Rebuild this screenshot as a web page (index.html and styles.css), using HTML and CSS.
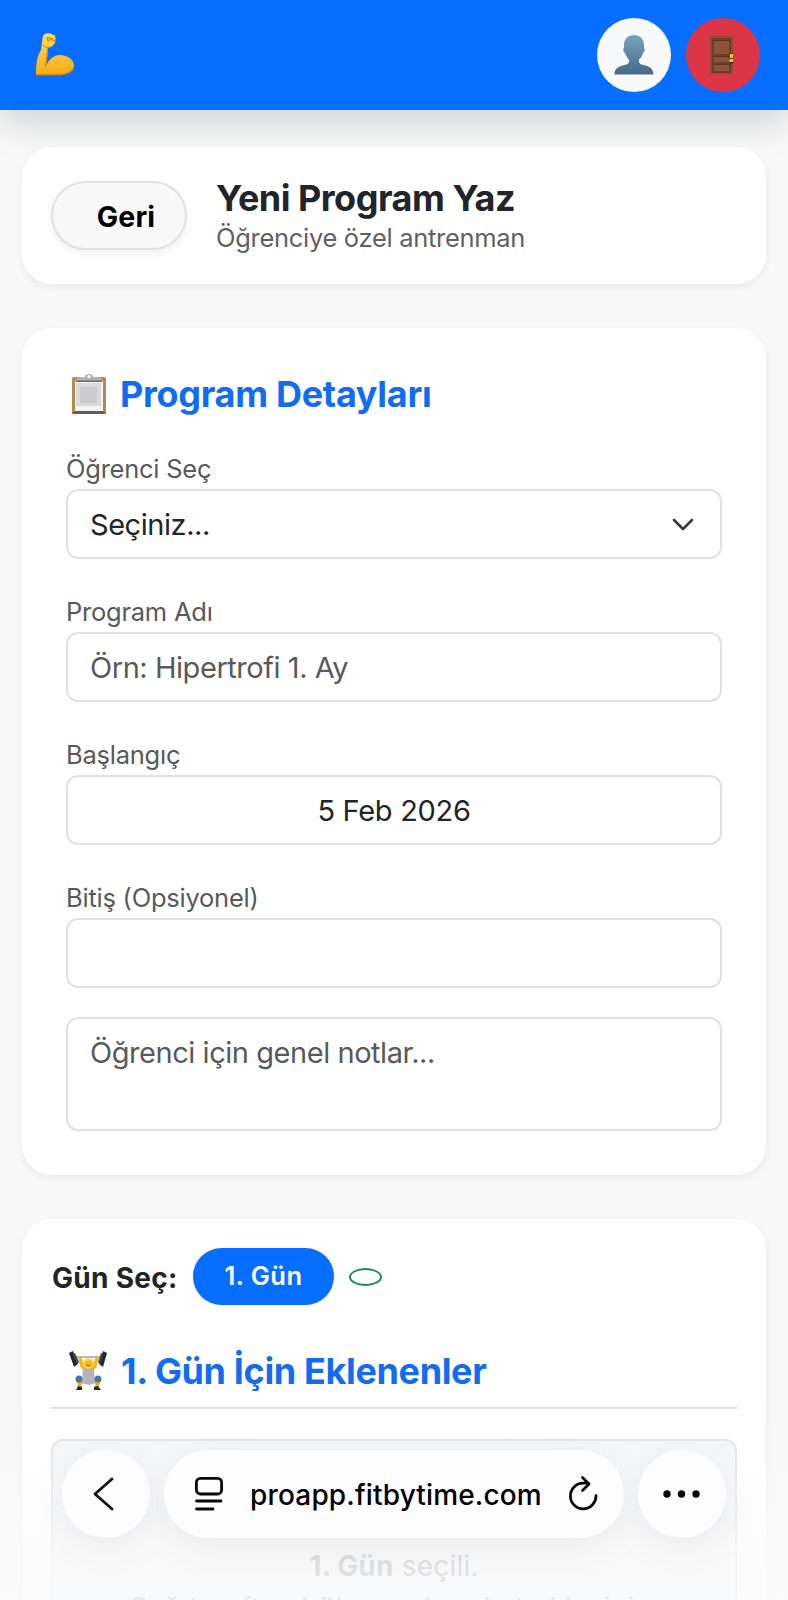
FILE: index.html
```html
<!doctype html>
<html lang="tr">
<head>
  <meta charset="UTF-8">
  <meta name="viewport" content="width=device-width, initial-scale=1.0">
  <title>Yeni Program Yaz</title>
  <link rel="stylesheet" href="styles.css">
</head>
<body>

<header class="Header">
  <svg class="Header-logo" viewBox="0 0 40 44" aria-hidden="true">
    <defs>
      <linearGradient id="skin" x1="0" y1="0" x2="0" y2="1">
        <stop offset="0" stop-color="#ffdb5c"/>
        <stop offset="1" stop-color="#f9ad16"/>
      </linearGradient>
    </defs>
    <path fill="url(#skin)" d="M8 3C10 0 13 0 15 .5L20 2.500L20.500 6L20 10L17 13.500L13 14.500C13 20 12 27 11 33C14 26 19 22 25 22C33 22 39 27 39 33C39 39 31 42 22 42H1C1 33 1.500 24 6 17C7 12 7 7 8 3Z"/>
    <path fill="none" stroke="#dc8b12" stroke-width="1.200" stroke-linecap="round" d="M8 12C10 15 14 15 17 13.500M12.500 15L11 31L10 34M12 4.500L17 5.500L13 8Q12 6 13 4.500M17 7L20 8"/>
    <path fill="none" stroke="#e58b10" stroke-width="1.500" d="M1 41.500H22C31 41.500 37 39 38.500 34"/>
  </svg>
  <nav class="Header-actions">
    <a class="IconButton" aria-label="Profil">
      <svg width="40" height="40" viewBox="0 0 40 40">
        <defs>
          <linearGradient id="bust" x1="0" y1="0" x2="0" y2="1">
            <stop offset="0" stop-color="#77a3bc"/>
            <stop offset="1" stop-color="#47698a"/>
          </linearGradient>
        </defs>
        <path fill="url(#bust)" d="M20 0C26 0 30 4 30 10V13C31.500 14 30.500 17 29 18C28 21 27 23 25 24.500V27C26 32 39 28 39.500 39.500H.5C1 28 14 32 15 27V24.500C13 23 12 21 11 18C9.500 17 8.500 14 10 13V10C10 4 14 0 20 0Z"/>
      </svg>
    </a>
    <a class="IconButton IconButton--danger" aria-label="Çıkış">
      <svg width="26" height="38" viewBox="0 0 26 38">
        <path fill="#8f4c34" d="M0 0H23V38H0Z"/>
        <path fill="#6d3d29" d="M2 2H21V37H2Z"/>
        <path fill="#8d5339" d="M4 5H19V18H4ZM4 21H19V26H4ZM4 29H19V35H4Z"/>
        <path fill="none" stroke="#5d3020" d="M3 4.500H20M3 20.500H20M3 28.500H20"/>
        <path fill="#4f3225" d="M20 17H23V28H20Z"/>
        <path fill="#f4c52d" d="M20 18H23V22H20ZM19.500 23H23V26H19.500Z"/>
      </svg>
    </a>
  </nav>
</header>

<main class="Page">
  <section class="Card Card--intro">
    <button type="button" class="BackButton">Geri</button>
    <div class="Intro">
      <h1 class="Intro-title">Yeni Program Yaz</h1>
      <p class="Intro-text">Öğrenciye özel antrenman</p>
    </div>
  </section>

  <section class="Card Card--details">
    <h2 class="Heading">
      <svg class="Heading-icon" viewBox="0 0 38 44" aria-hidden="true">
        <rect x="4" y="5" width="34" height="37" rx="2" fill="#b28a4e"/>
        <path fill="#8a5b25" d="M4 40H38V41Q38 42 36 42H6Q4 42 4 41Z"/>
        <path fill="#f4f4f4" d="M7 9H35V39H7Z"/>
        <path fill="#dadada" d="M8 11H33V34H8Z"/>
        <path fill="#cbcbce" d="M12 15H29V31H12Z"/>
        <path fill="#5d5c5b" d="M7 39H35V41H7Z"/>
        <path fill="#aeb3b3" d="M8 9V7Q9 5 13 5H17Q17 2 21 2T25 5H29Q33 5 34 7V9Z"/>
        <path fill="#686b6d" d="M8 8.500H34V10H8Z"/>
        <circle cx="21" cy="4.500" r="1.600" fill="#fff"/>
      </svg>
      Program Detayları
    </h2>

    <div class="Field">
      <label class="Field-label">Öğrenci Seç</label>
      <div class="Field-control Field-control--select">
        <span>Seçiniz...</span>
        <svg width="22" height="14" viewBox="0 0 22 14" aria-hidden="true">
          <path fill="none" stroke="#343a40" stroke-width="2.600" stroke-linecap="round" stroke-linejoin="round" d="M2 2L11 11L20 2"/>
        </svg>
      </div>
    </div>

    <div class="Field">
      <label class="Field-label">Program Adı</label>
      <div class="Field-control Field-control--placeholder">Örn: Hipertrofi 1. Ay</div>
    </div>

    <div class="Field">
      <label class="Field-label">Başlangıç</label>
      <div class="Field-control Field-control--date">5 Feb 2026</div>
    </div>

    <div class="Field">
      <label class="Field-label">Bitiş (Opsiyonel)</label>
      <div class="Field-control"></div>
    </div>

    <div class="Field-control Field-control--area">Öğrenci için genel notlar...</div>
  </section>

  <section class="Card Card--days">
    <div class="Days">
      <span class="Days-label">Gün Seç:</span>
      <button type="button" class="Days-tab">1. Gün</button>
      <button type="button" class="Days-add" aria-label="Gün ekle"></button>
    </div>
    <h2 class="Heading Heading--days">
      <svg class="Heading-icon" viewBox="0 0 38 44" aria-hidden="true">
        <path fill="none" stroke="#868686" stroke-width="1.200" d="M5 8H33"/>
        <path fill="none" stroke="#f4b51b" stroke-width="3.600" stroke-linejoin="round" d="M11 9L13 17L17 21H22L26 17L28 9"/>
        <path fill="#25282d" d="M0 4L4 2L9 15L5 18ZM34 2L38 4L34 18L30 15Z"/>
        <path fill="#44484e" d="M4 5L6 4L10 13L8 15ZM32 4L34 5L31 15L29 13Z"/>
        <path fill="none" stroke="#edad18" stroke-width="3.600" d="M15 32L10 34L12 40M24 32L29 34L27 40"/>
        <path fill="#b2b4b8" d="M14 18L17 20H22L25 18L26 34L20 36L13 34Z"/>
        <circle cx="19.500" cy="14" r="4.500" fill="#f9b91b"/>
        <path fill="#ffd65a" d="M15 13Q15 9 20 9Q24 10 24 13L20 11Z"/>
        <path fill="none" stroke="#98551e" d="M17.500 16Q19.500 18 21.500 16"/>
        <circle cx="10" cy="30" r="3.500" fill="#4b76a3"/>
        <circle cx="29" cy="30" r="3.500" fill="#4b76a3"/>
        <path fill="#292b2e" d="M7 41L9 37L13 38V41ZM25 38L29 37L32 41H25Z"/>
      </svg>
      1. Gün İçin Eklenenler
    </h2>
    <div class="Empty">
      <p><strong>1. Gün</strong> seçili.</p>
      <p>Sağ taraftan bölge ve hareket ekleyiniz.</p>
    </div>
  </section>
</main>

<div class="Browser">
  <span class="Browser-button">
    <svg width="88" height="88" viewBox="0 0 88 88" aria-hidden="true">
      <path fill="none" stroke="#111" stroke-width="2.800" stroke-linecap="round" stroke-linejoin="round" d="M50 29L33 44L50 59"/>
    </svg>
  </span>
  <div class="Browser-address">
    <svg width="30" height="34" viewBox="0 0 30 34" aria-hidden="true">
      <g fill="none" stroke="#080808" stroke-width="2.800" stroke-linecap="round">
        <rect x="2.400" y="1.400" width="25.200" height="15.600" rx="4"/>
        <path d="M2.500 24H27M2.500 32H19"/>
      </g>
    </svg>
    <span class="Browser-url">proapp.fitbytime.com</span>
    <svg width="30" height="36" viewBox="0 0 30 36" aria-hidden="true">
      <path fill="none" stroke="#080808" stroke-width="2.700" stroke-linecap="round" stroke-linejoin="round" d="M28 19.500A12.800 12.800 0 1 1 15.200 7.200H20.500M14.500 1.500L21 8L14.500 14.500"/>
    </svg>
  </div>
  <span class="Browser-button">
    <svg width="88" height="88" viewBox="0 0 88 88" aria-hidden="true">
      <g fill="#080808">
        <circle cx="29" cy="44" r="3.700"/>
        <circle cx="43.500" cy="44" r="3.700"/>
        <circle cx="58" cy="44" r="3.700"/>
      </g>
    </svg>
  </span>
</div>

</body>
</html>
```
FILE: styles.css
```css
* {
  box-sizing: border-box;
}

body {
  position: relative;
  height: 1600px;
  margin: 0;
  overflow: hidden;
  background-color: #f8f8f8;
  color: #212529;
  font-family: Inter, "Liberation Sans", sans-serif;
  font-size: 29px;
}

h1,
h2,
p {
  margin: 0;
}

button {
  font-family: inherit;
}

.Header {
  display: flex;
  align-items: center;
  justify-content: space-between;
  height: 110px;
  padding: 0 28px 0 35px;
  background-color: #086eff;
  box-shadow: 0 16px 32px rgb(10 20 30 / 14%);
}

.Header-logo {
  width: 40px;
  height: 44px;
}

.Header-actions {
  display: flex;
  gap: 15px;
}

.IconButton {
  display: flex;
  align-items: center;
  justify-content: center;
  width: 74px;
  height: 74px;
  border-radius: 50%;
  background-color: #f8f9fa;
}

.IconButton--danger {
  background-color: #dc3545;
}

.Page {
  position: relative;
  display: flex;
  flex-direction: column;
  gap: 44px;
  padding: 37px 22px 0;
}

.Card {
  border-radius: 30px;
  background-color: white;
  box-shadow: 0 4px 8px rgb(0 0 0 / 5.5%);
}

.Card--intro {
  display: flex;
  align-items: center;
  gap: 29px;
  height: 137px;
  padding: 0 29px;
}

.BackButton {
  width: 136px;
  height: 69px;
  padding: 1px 0 0 14px;
  border: 2px solid #e2e2e3;
  border-radius: 35px;
  background-color: #f8f8f8;
  box-shadow: 0 4px 8px rgb(0 0 0 / 6%);
  color: black;
  font-size: 28.5px;
  font-weight: 650;
  letter-spacing: 0.1px;
}

.Intro {
  padding-top: 1px;
}

.Intro-title {
  font-size: 36px;
  font-weight: 700;
  letter-spacing: -0.5px;
  line-height: 44px;
}

.Intro-text {
  color: #606163;
  font-size: 25.5px;
  letter-spacing: -0.3px;
  line-height: 36px;
}

.Card--details {
  height: 847px;
  padding: 44px;
}

.Heading {
  display: flex;
  align-items: center;
  gap: 14px;
  margin-bottom: 36px;
  padding-left: 2px;
  color: #116cf2;
  font-size: 36px;
  font-weight: 700;
  letter-spacing: -0.3px;
  line-height: 44px;
}

.Heading-icon {
  width: 38px;
  height: 44px;
}

.Field {
  margin-bottom: 36px;
}

.Field:nth-last-child(2) {
  margin-bottom: 29px;
}

.Field-label {
  display: block;
  height: 37px;
  color: #58595b;
  font-size: 25.5px;
  letter-spacing: -0.24px;
  line-height: 34px;
}

.Field-control {
  display: flex;
  align-items: center;
  height: 70px;
  padding: 1px 22px 0;
  border: 2px solid #e1e1e4;
  border-radius: 12px;
  letter-spacing: -0.45px;
  line-height: 44px;
}

.Field-control--select {
  justify-content: space-between;
  padding-right: 26px;
}

.Field-control--placeholder,
.Field-control--area {
  color: #58595b;
}

.Field-control--date {
  justify-content: center;
  letter-spacing: -0.3px;
}

.Field-control--area {
  align-items: flex-start;
  height: 114px;
  padding-top: 12px;
}

.Card--days {
  height: 480px;
  padding: 29px;
}

.Days {
  display: flex;
  align-items: center;
  gap: 15px;
  height: 57px;
}

.Days-label {
  width: 127px;
  padding: 2px 0 0 1px;
  font-size: 28px;
  font-weight: 650;
  letter-spacing: 0.3px;
  white-space: nowrap;
}

.Days-tab {
  width: 141px;
  height: 57px;
  padding: 0 0 2px;
  border: 0;
  border-radius: 29px;
  background-color: #086eff;
  color: white;
  font-size: 25.5px;
  font-weight: 600;
  letter-spacing: 0.5px;
}

.Days-add {
  width: 33px;
  height: 18px;
  padding: 0;
  border: 2px solid #198754;
  border-radius: 50%;
  background-color: white;
}

.Heading--days {
  height: 61px;
  margin: 43px 0 30px;
  padding: 0 0 14px 18px;
  border-bottom: 2px solid #dee0e2;
  font-weight: 650;
  letter-spacing: -0.36px;
}

.Empty {
  height: 240px;
  padding: 104px 20px 0;
  border: 2px solid #dfe0e1;
  border-radius: 12px;
  background-color: #f3f4f5;
  color: #6c757d;
  font-size: 28px;
  letter-spacing: 0.2px;
  line-height: 42px;
  text-align: center;
}

/* Floating browser bar with the fade behind it */
.Browser {
  position: absolute;
  inset: auto 0 0;
  display: flex;
  gap: 14px;
  height: 210px;
  padding: 60px 62px 0;
  background-image: linear-gradient(rgb(251 251 252 / 0%), rgb(251 251 252 / 30%) 35%, rgb(251 251 252 / 78%) 75%, rgb(251 251 252 / 86%));
}

.Browser-button,
.Browser-address {
  height: 88px;
  border-radius: 44px;
  background-color: #fdfdff;
  box-shadow: 0 12px 40px rgb(0 0 0 / 6%);
}

.Browser-button {
  flex: none;
  width: 88px;
}

.Browser-address {
  display: flex;
  flex: 1;
  align-items: center;
  justify-content: space-between;
  padding: 0 26px 0 30px;
  color: black;
}

.Browser-url {
  padding-top: 1px;
  font-size: 28px;
  font-weight: 500;
  letter-spacing: 0.15px;
}
```
